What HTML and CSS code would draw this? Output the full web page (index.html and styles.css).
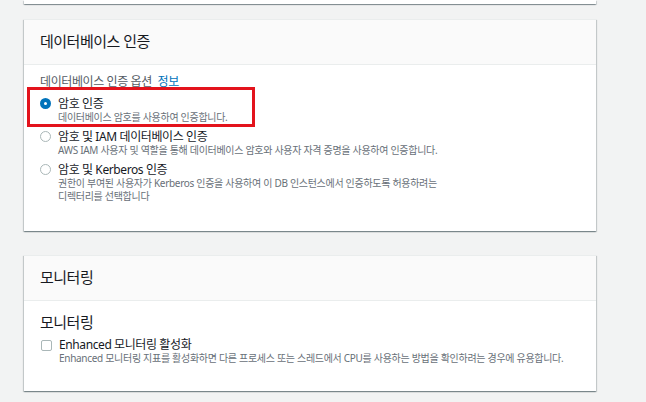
FILE: index.html
```html
<!DOCTYPE html>
<html lang="ko">
<head>
    <meta charset="UTF-8">
    <meta name="viewport" content="width=device-width, initial-scale=1.0">
    <title>데이터베이스 인증</title>
    <link rel="stylesheet" href="styles.css">
</head>
<body>

    <div class="page">
        <div class="card card-end"></div>

        <section class="card">
            <div class="card-header">
                <h2>데이터베이스 인증</h2>
            </div>
            <div class="card-body auth-body">
                <div class="field-label">데이터베이스 인증 옵션 <a class="info" href="#">정보</a></div>

                <div class="options">
                    <label class="option">
                        <span class="radio checked"></span>
                        <span class="option-text">
                            <span class="option-title">암호 인증</span>
                            <span class="option-desc">데이터베이스 암호를 사용하여 인증합니다.</span>
                        </span>
                        <span class="highlight"></span>
                    </label>

                    <label class="option">
                        <span class="radio"></span>
                        <span class="option-text">
                            <span class="option-title">암호 및 IAM 데이터베이스 인증</span>
                            <span class="option-desc">AWS IAM 사용자 및 역할을 통해 데이터베이스 암호와 사용자 자격 증명을 사용하여 인증합니다.</span>
                        </span>
                    </label>

                    <label class="option">
                        <span class="radio"></span>
                        <span class="option-text">
                            <span class="option-title">암호 및 Kerberos 인증</span>
                            <span class="option-desc">권한이 부여된 사용자가 Kerberos 인증을 사용하여 이 DB 인스턴스에서 인증하도록 허용하려는 디렉터리를 선택합니다</span>
                        </span>
                    </label>
                </div>
            </div>
        </section>

        <section class="card">
            <div class="card-header">
                <h2>모니터링</h2>
            </div>
            <div class="card-body monitor-body">
                <h3>모니터링</h3>
                <label class="option">
                    <span class="checkbox"></span>
                    <span class="option-text">
                        <span class="option-title">Enhanced 모니터링 활성화</span>
                        <span class="option-desc wide">Enhanced 모니터링 지표를 활성화하면 다른 프로세스 또는 스레드에서 CPU를 사용하는 방법을 확인하려는 경우에 유용합니다.</span>
                    </span>
                </label>
            </div>
        </section>
    </div>

</body>
</html>
```

FILE: styles.css
```css
body {
    margin: 0;
    background: #f2f3f3;
    font-family: "Noto Sans", "Noto Sans CJK KR", sans-serif;
    color: #16191f;
}

.page {
    width: 572px;
    margin-left: 24px;
}

.card {
    background: #ffffff;
    border-top: 1px solid #eaeded;
    box-shadow: 0 1px 1px 0 rgba(0, 28, 36, 0.3),
                1px 1px 1px 0 rgba(0, 28, 36, 0.15),
                -1px 1px 1px 0 rgba(0, 28, 36, 0.15);
    margin-bottom: 24px;
}

/* tail of the card above, cut by the top of the window */
.card-end {
    height: 4px;
    border-top: none;
    margin-bottom: 15px;
}

.card-header {
    background: #fafafa;
    border-bottom: 1px solid #eaeded;
    padding: 11px 16px 13px;
}

.card-header h2,
.card-body h3 {
    margin: 0;
    font-size: 15px;
    line-height: 20px;
    font-weight: normal;
    letter-spacing: -0.5px;
}

.card-body {
    padding: 0 16px;
}

.auth-body {
    padding-top: 10px;
    padding-bottom: 28px;
}

.monitor-body {
    padding-top: 11px;
    padding-bottom: 26px;
}

.monitor-body h3 {
    margin-bottom: 5px;
}

.field-label {
    font-size: 12px;
    line-height: 14px;
    color: #545b64;
    letter-spacing: -0.4px;
}

.info {
    color: #0073bb;
    text-decoration: none;
    margin-left: 3px;
}

.options {
    margin-top: 7px;
    display: flex;
    flex-direction: column;
    gap: 5px;
}

.option {
    position: relative;
    display: flex;
    align-items: flex-start;
    gap: 7px;
}

.radio {
    flex: none;
    width: 11px;
    height: 11px;
    margin-top: 2px;
    box-sizing: border-box;
    border: 1px solid #aab7b8;
    border-radius: 50%;
    background: #ffffff;
}

.radio.checked {
    border: 4px solid #0073bb;
}

.checkbox {
    flex: none;
    width: 11px;
    height: 11px;
    margin: 3px 0 0 1px;
    box-sizing: border-box;
    border: 1px solid #aab7b8;
    border-radius: 2px;
    background: #ffffff;
}

.option-text {
    display: flex;
    flex-direction: column;
}

.option-title {
    font-size: 12px;
    line-height: 15px;
    letter-spacing: -0.4px;
}

.option-desc {
    font-size: 10px;
    line-height: 13px;
    color: #687078;
    letter-spacing: -0.3px;
    max-width: 400px;
    word-break: keep-all;
}

.option-desc.wide {
    max-width: none;
}

/* red annotation frame drawn over the first option */
.highlight {
    position: absolute;
    left: -13px;
    top: -9px;
    width: 228px;
    height: 40px;
    box-sizing: border-box;
    border: 3px solid #e3131c;
}
```
